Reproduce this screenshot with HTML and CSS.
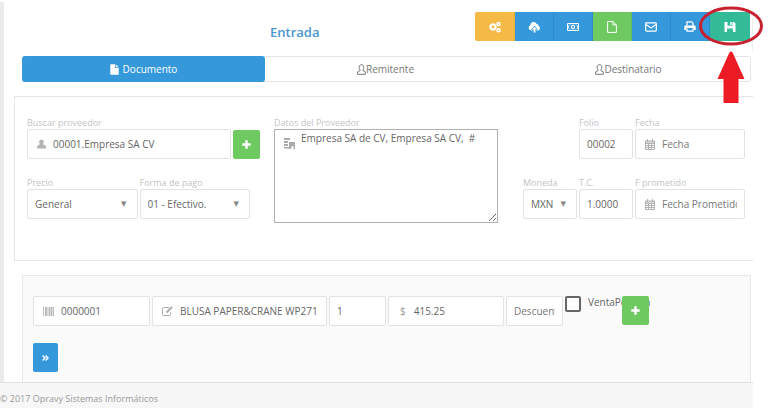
FILE: index.html
```
<!doctype html>
<html lang="es">
  <head>
    <meta charset="UTF-8" />
    <meta name="viewport" content="width=device-width, initial-scale=1.0" />
    <title>Entrada</title>
    <link rel="stylesheet" href="styles.css">
  </head>

  <body>
    <div class="page">
      <main class="content">
        <header class="header">
          <h1 class="title">Entrada</h1>
          <div class="toolbar">
            <button class="tool orange" type="button" aria-label="Opciones">
              <svg width="12" height="12" viewBox="0 0 12 12" fill="none" stroke="#fff">
                <circle cx="4" cy="6" r="2.4" stroke-width="2" />
                <circle cx="4" cy="6" r="3.500" stroke-width="1" stroke-dasharray="1.300 1.450" />
                <circle cx="9.500" cy="3" r="1.500" stroke-width="1.600" />
                <circle cx="9.500" cy="9.200" r="1.500" stroke-width="1.600" />
              </svg>
            </button>
            <button class="tool" type="button" aria-label="Subir">
              <svg width="13" height="12" viewBox="0 0 13 12">
                <path fill="#fff" d="M3.200 9.500A2.800 2.800 0 0 1 2.200 4.200 3.400 3.400 0 0 1 8.700 3.100 2 2 0 0 1 10.600 5 2.400 2.400 0 0 1 10.200 9.500H8.500V8.800H10L6.500 4.800 3 8.800H4.500V9.500Z" />
                <path fill="#fff" d="M6.500 5.700 9 8.500H7.400v3H5.600v-3H4Z" />
              </svg>
            </button>
            <button class="tool" type="button" aria-label="Pago">
              <svg width="12" height="10" viewBox="0 0 12 10" fill="none" stroke="#fff">
                <path d="M.5 1.500h11v7H.5Z" />
                <path d="M3 2.500 1.500 4v2L3 7.500M9 2.500 10.500 4v2L9 7.500" stroke-width=".8" />
                <ellipse cx="6" cy="5" rx="1.500" ry="1.900" stroke-width="1.200" />
              </svg>
            </button>
            <button class="tool green" type="button" aria-label="Nuevo">
              <svg width="10" height="12" viewBox="0 0 10 12" fill="none" stroke="#fff">
                <path d="M.6.6H6L9.400 4v7.400H.6ZM6 .6V4h3.400" />
              </svg>
            </button>
            <button class="tool" type="button" aria-label="Correo">
              <svg width="12" height="10" viewBox="0 0 12 10" fill="none" stroke="#fff" stroke-width="1.200">
                <rect x=".7" y=".9" width="10.600" height="8.200" rx=".8" />
                <path d="M1 2.500 6 6l5-3.500" />
              </svg>
            </button>
            <button class="tool" type="button" aria-label="Imprimir">
              <svg width="12" height="11" viewBox="0 0 12 11">
                <path fill="none" stroke="#fff" stroke-width="1.200" d="M3 5V.8h4.500L9 2.300V5M3 7.500v2.700h6V7.500" />
                <path fill="#fff" d="M1.500 4.500h9A1.200 1.200 0 0 1 11.700 5.700V9H9.500V7h-7v2H.3V5.700A1.200 1.200 0 0 1 1.500 4.500Z" />
              </svg>
            </button>
            <div class="save">
              <button class="tool teal" type="button" aria-label="Guardar">
                <svg width="12" height="12" viewBox="0 0 12 12">
                  <path fill="#fff" fill-rule="evenodd" d="M.5 1H3.500V4.800h5V1H10L11.500 2.500V11H9V7.500H3V11H.5ZM6.300 1h1.500v3H6.300Z" />
                </svg>
              </button>
              <svg class="callout" width="66" height="100" viewBox="0 0 66 100">
                <ellipse cx="33" cy="21" rx="30.500" ry="18" fill="none" stroke="#c8202f" stroke-width="3" />
                <path fill="#ed1c24" d="M33 46.500q1 0 1.600 1L46.500 74H40.500V98H25.500V74H19.500L31.400 47.500q.6-1 1.600-1Z" />
              </svg>
            </div>
          </div>
        </header>

        <nav class="tabs">
          <a class="tab active" href="#documento">
            <svg width="9" height="11" viewBox="0 0 9 11">
              <path fill="#fff" d="M.3.3H5v3.700h3.700v6.700H.3ZM5.700.3 8.700 3.300h-3Z" />
            </svg>
            Documento
          </a>
          <a class="tab" href="#remitente">
            <svg width="9" height="11" viewBox="0 0 9 11" fill="none" stroke="#777">
              <path d="M4.500.7C6 .7 6.800 1.700 6.800 3.200S5.800 6 5.800 6.500l2.500 1.300v2.500H.7V7.800L3.200 6.500C3.200 6 2.200 4.700 2.200 3.200S3 .7 4.500.7Z" />
            </svg>
            Remitente
          </a>
          <a class="tab" href="#destinatario">
            <svg width="9" height="11" viewBox="0 0 9 11" fill="none" stroke="#777">
              <path d="M4.500.7C6 .7 6.800 1.700 6.800 3.200S5.800 6 5.800 6.500l2.500 1.300v2.500H.7V7.800L3.200 6.500C3.200 6 2.200 4.700 2.200 3.200S3 .7 4.500.7Z" />
            </svg>
            Destinatario
          </a>
        </nav>

        <section class="document" id="documento">
          <div class="group">
            <div class="row">
              <div class="field wide">
                <label for="proveedor">Buscar proveedor</label>
                <div class="control">
                  <svg class="icon" width="9" height="10" viewBox="0 0 10 10">
                    <path fill="#b5b5b5" d="M5 0c1.700 0 2.600 1.100 2.600 2.600 0 1.300-.5 2.100-1 2.700L9.200 6.500Q10 7 10 10H0Q0 7 .8 6.500L3.400 5.300c-.5-.6-1-1.400-1-2.700C2.400 1.100 3.300 0 5 0Z" />
                  </svg>
                  <input id="proveedor" type="text" value="00001.Empresa SA CV" />
                </div>
              </div>
              <button class="add" type="button" aria-label="Agregar proveedor">
                <svg width="9" height="9" viewBox="0 0 9 9"><path fill="#fff" d="M3.300.3h2.400v3h3v2.400h-3v3H3.300v-3h-3V3.300h3Z" /></svg>
              </button>
            </div>
            <div class="row pair">
              <div class="field wide">
                <label for="precio">Precio</label>
                <div class="control">
                  <select id="precio"><option>General</option></select>
                  <span class="caret">▼</span>
                </div>
              </div>
              <div class="field wide">
                <label for="pago">Forma de pago</label>
                <div class="control">
                  <select id="pago"><option>01 - Efectivo.</option></select>
                  <span class="caret">▼</span>
                </div>
              </div>
            </div>
          </div>

          <div class="field">
            <label for="datos">Datos del Proveedor</label>
            <div class="memo">
              <svg class="icon" width="11" height="11" viewBox="0 0 11 11">
                <path fill="#aaa" d="M0 0h6v2H0ZM0 3h4v2H0ZM0 6h4v2H0ZM0 9h5v1.500H0ZM5 4h6v7H9.500V8H8l-1.500 3H5Z" />
              </svg>
              <textarea id="datos">Empresa SA de CV, Empresa SA CV,  #</textarea>
            </div>
          </div>

          <div class="group dates">
            <div class="row end">
              <div class="field small">
                <label for="folio">Folio</label>
                <div class="control"><input id="folio" type="text" value="00002" /></div>
              </div>
              <div class="field medium">
                <label for="fecha">Fecha</label>
                <div class="control">
                  <svg class="icon" width="10" height="11" viewBox="0 0 10 11" fill="none" stroke="#aaa">
                    <path d="M.5 2h9v8.500h-9ZM.5 4.500h9M.5 6.500h9M.5 8.500h9M3.500 4.500v6M6.500 4.500v6M2.500 0v3M7.500 0v3M1 3h8" stroke-width=".9" />
                  </svg>
                  <input id="fecha" type="text" placeholder="Fecha" />
                </div>
              </div>
            </div>
            <div class="row end">
              <div class="field small">
                <label for="moneda">Moneda</label>
                <div class="control">
                  <select id="moneda"><option>MXN</option></select>
                  <span class="caret">▼</span>
                </div>
              </div>
              <div class="field small">
                <label for="tc">T.C.</label>
                <div class="control"><input id="tc" type="text" value="1.0000" /></div>
              </div>
              <div class="field medium">
                <label for="prometido">F prometido</label>
                <div class="control">
                  <svg class="icon" width="10" height="11" viewBox="0 0 10 11" fill="none" stroke="#aaa">
                    <path d="M.5 2h9v8.500h-9ZM.5 4.500h9M.5 6.500h9M.5 8.500h9M3.500 4.500v6M6.500 4.500v6M2.500 0v3M7.500 0v3M1 3h8" stroke-width=".9" />
                  </svg>
                  <input id="prometido" type="text" placeholder="Fecha Prometido" />
                </div>
              </div>
            </div>
          </div>
        </section>

        <section class="items">
          <div class="item-row">
            <div class="control">
              <svg class="icon" width="11" height="9" viewBox="0 0 11 9">
                <path fill="#bbb" d="M0 0h1v9H0ZM2 0h2v9H2ZM4.500 0h1v9h-1ZM6 0h1.500v9H6ZM8 0h1v9H8ZM9.500 0H11v9H9.500Z" />
              </svg>
              <input type="text" value="0000001" aria-label="Código" />
            </div>
            <div class="control">
              <svg class="icon" width="11" height="10" viewBox="0 0 11 10" fill="none" stroke="#aaa">
                <path d="M7 1.500H1.500q-1 0-1 1v6q0 1 1 1h6q1 0 1-1V6.500" />
                <path d="M4.500 6.500 10 1" stroke-width="2" />
              </svg>
              <input type="text" value="BLUSA PAPER&amp;CRANE WP271" aria-label="Producto" />
            </div>
            <div class="control"><input type="text" value="1" aria-label="Cantidad" /></div>
            <div class="control">
              <span class="icon currency">$</span>
              <input type="text" value="415.25" aria-label="Precio" />
            </div>
            <div class="control"><input type="text" placeholder="Descuento" aria-label="Descuento" /></div>
            <div class="portion">
              <input id="porcion" type="checkbox" />
              <label for="porcion">VentaPorción</label>
              <button class="add" type="button" aria-label="Agregar producto">
                <svg width="9" height="9" viewBox="0 0 9 9"><path fill="#fff" d="M3.300.3h2.400v3h3v2.400h-3v3H3.300v-3h-3V3.300h3Z" /></svg>
              </button>
            </div>
          </div>
          <button class="more" type="button" aria-label="Ver más">
            <svg width="7" height="6" viewBox="0 0 7 6" fill="none" stroke="#fff" stroke-width="1.400">
              <path d="M.6.5 3 3 .6 5.500M3.600.5 6 3 3.600 5.500" />
            </svg>
          </button>
        </section>
      </main>

      <footer class="footer">© 2017 Opravy Sistemas Informáticos</footer>
    </div>
  </body>
</html>
```
FILE: styles.css
```
* {
  box-sizing: border-box;
  margin: 0;
  padding: 0;
}

body {
  background: #fff;
  color: #666;
  font-family: 'Open Sans', sans-serif;
  font-size: 10px;
}

button,
input,
select,
textarea {
  font: inherit;
  color: inherit;
}

svg {
  display: block;
  flex-shrink: 0;
}

.page {
  display: flex;
  flex-direction: column;
  min-height: 100vh;
  margin-right: 15px;
}

.content {
  display: flex;
  flex-direction: column;
  flex: 1;
  margin-top: 2px;
  padding-top: 10px;
  border-left: 4px solid #ebebeb;
}

/* header */
.header {
  display: flex;
  justify-content: space-between;
  height: 39px;
  margin-bottom: 5px;
  padding-left: 266px;
  padding-right: 2px;
  border-right: 1px solid #eee;
}

.title {
  padding-top: 10px;
  color: #4a96cf;
  font-size: 13px;
  font-weight: 600;
  line-height: 20px;
}

.toolbar {
  display: flex;
  height: 29px;
}

.tool {
  display: flex;
  align-items: center;
  justify-content: center;
  width: 39px;
  height: 29px;
  border: none;
  border-right: 1px solid #3089cb;
  background: #3598db;
  cursor: pointer;
}

.orange {
  width: 40px;
  border-color: #e9ae3c;
  border-radius: 2px 0 0 2px;
  background: #f5b945;
}

.green {
  border-color: #62bd58;
  background: #6ec960;
}

.teal {
  width: 40px;
  border: none;
  border-radius: 0 2px 2px 0;
  background: #33bb98;
}

.save {
  position: relative;
}

.callout {
  position: absolute;
  top: -7px;
  left: -12px;
  pointer-events: none;
}

/* tabs */
.tabs {
  display: flex;
  height: 26px;
  margin: 0 2px 14px 18px;
  border: 1px solid #e5e5e5;
  border-radius: 3px;
}

.tab {
  display: flex;
  flex: 1;
  align-items: center;
  justify-content: center;
  color: #777;
  text-decoration: none;
}

.active {
  gap: 4px;
  margin: -1px -1px -1px -1px;
  border-radius: 3px;
  background: #3598db;
  color: #fff;
}

/* document form */
.document {
  display: grid;
  grid-template-columns: 233fr 224fr 233fr;
  column-gap: 14px;
  align-items: start;
  margin: 0 0 14px 10px;
  padding: 20px 8px 37px 12px;
  border: 1px solid #e5e5e5;
  border-right: none;
}

.group {
  display: flex;
  flex-direction: column;
  gap: 18px;
  min-width: 0;
}

.dates {
  padding-left: 10px;
}

.row {
  display: flex;
  align-items: flex-end;
  gap: 2px;
}

.pair {
  padding-right: 10px;
}

.end {
  justify-content: flex-end;
}

.field {
  min-width: 0;
}

.field label {
  display: block;
  color: #c4c4c4;
  font-size: 9px;
  line-height: 12px;
  white-space: nowrap;
}

.wide {
  flex: 1;
}

.small {
  flex: 0 1 54px;
}

.medium {
  flex: 0 1 110px;
}

.control {
  display: flex;
  align-items: center;
  min-width: 0;
  height: 30px;
  padding: 0 7px;
  border: 1px solid #e2e2e2;
  border-radius: 2px;
  background: #fff;
}

.icon {
  margin: 0 7px 0 2px;
}

.control input,
.control select {
  flex: 1;
  width: 0;
  min-width: 0;
  border: none;
  outline: none;
  background: none;
  appearance: none;
}

.control ::placeholder {
  color: #777;
  opacity: 1;
}

.caret {
  padding-right: 3px;
  color: #888;
  font-family: 'DejaVu Sans', sans-serif;
  font-size: 7px;
  pointer-events: none;
}

.memo {
  display: flex;
  position: relative;
}

.memo .icon {
  position: absolute;
  top: 9px;
  left: 8px;
}

.memo textarea {
  width: 100%;
  height: 94px;
  padding: 0 8px 0 26px;
  border: 1px solid #b0b0b0;
  outline: none;
  line-height: 16px;
}

.add,
.more {
  display: flex;
  align-items: center;
  justify-content: center;
  flex-shrink: 0;
  width: 27px;
  height: 29px;
  border: none;
  border-radius: 2px;
  background: #6ec960;
  cursor: pointer;
}

.more {
  width: 25px;
  background: #3598db;
}

/* item lines */
.items {
  display: flex;
  flex-direction: column;
  flex: 1;
  gap: 17px;
  margin: 0 2px 0 18px;
  padding: 20px 10px 9px;
  border: 1px solid #e8e8e8;
  border-bottom: none;
  background: #fafafa;
}

.item-row {
  display: grid;
  grid-template-columns: 117fr 175fr 57fr 116fr 57fr 175fr;
  gap: 2px;
}

.currency {
  margin: 0 8px 0 4px;
  color: #999;
}

.portion {
  display: flex;
  position: relative;
  align-items: flex-start;
  gap: 7px;
}

.portion input {
  width: 16px;
  height: 16px;
  border: 2px solid #666;
  border-radius: 2px;
  background: #fff;
  appearance: none;
}

.portion label {
  line-height: 13px;
}

/* the add button sits over the end of the label */
.portion .add {
  position: absolute;
  top: 0;
  left: 57px;
}

.footer {
  padding-top: 6px;
  border-top: 1px solid #e2e2e2;
  background: #f7f7f7;
  color: #999;
  font-size: 9px;
  line-height: 19px;
}
```
